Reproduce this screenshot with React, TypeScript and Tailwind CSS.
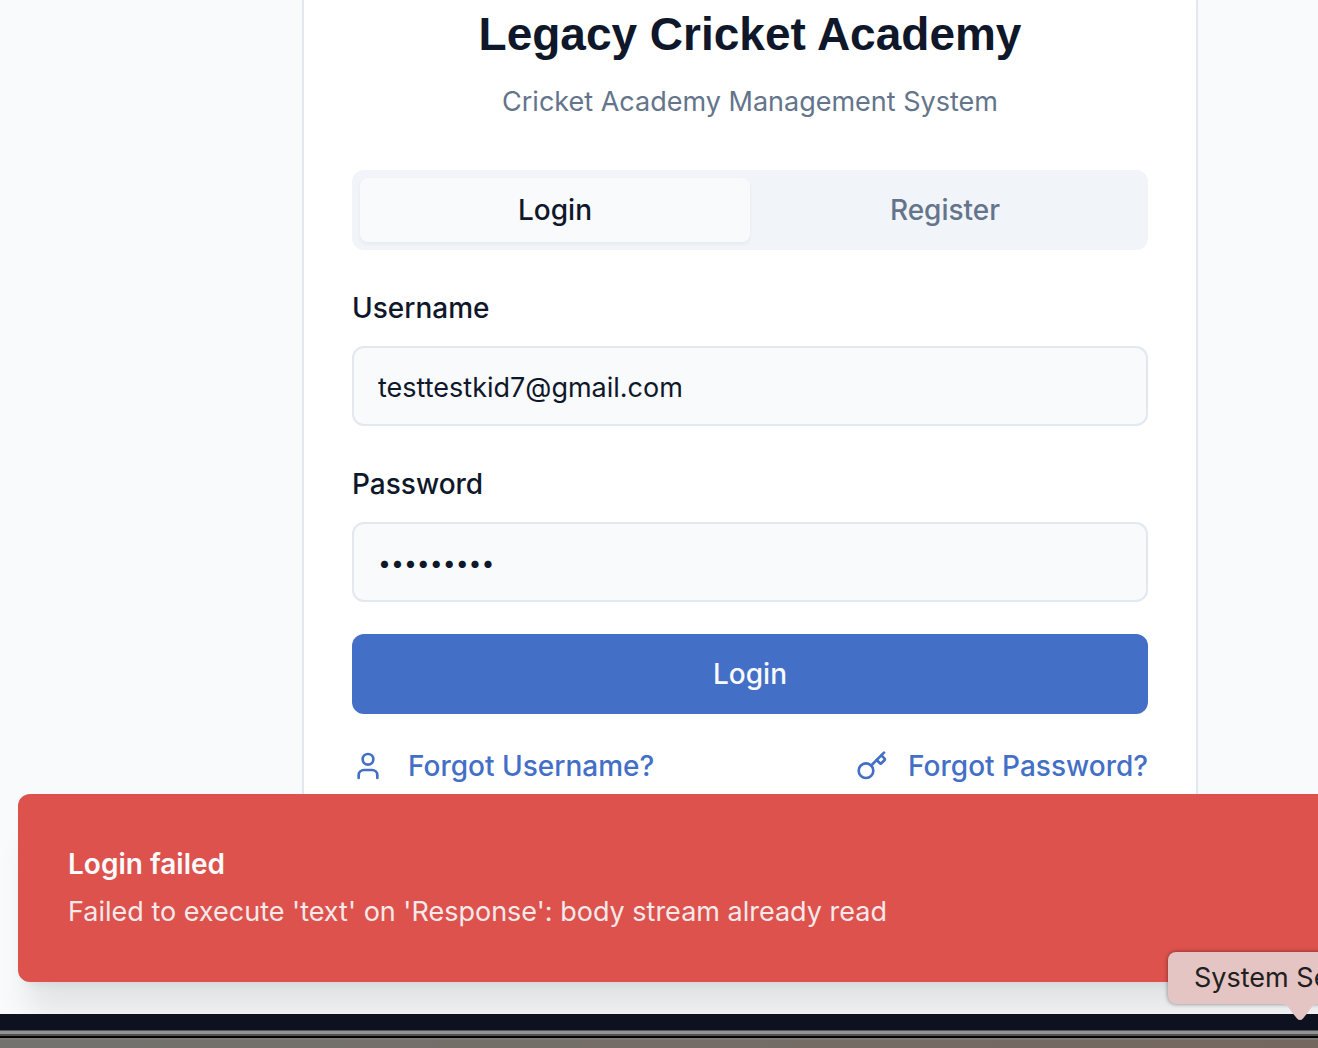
import React from "react";
import { User, Key } from "lucide-react";

const field =
  "mt-5 block h-20 w-full rounded-xl border-2 border-[#e2e8f0] bg-[#f8fafc] px-6 pt-0.5 text-[#0f172a] outline-none";

export default function App() {
  return (
    <div className="relative flex h-screen flex-col overflow-hidden bg-[#f8fafc] font-['Inter',sans-serif] text-[#0f172a]">
      <main className="flex min-h-0 flex-1 items-start justify-center pl-[182px]">
        <section className="w-full max-w-[896px] rounded-b-2xl border-x-2 border-b-2 border-[#e2e8f0] bg-white px-12 pb-12 shadow-xs">
          <h1 className="pt-1 text-center font-['Liberation_Sans',sans-serif] text-[46px] leading-[60px] font-bold">
            Legacy Cricket Academy
          </h1>
          <p className="mt-5 text-center text-[27px] leading-9 text-[#64748b]">
            Cricket Academy Management System
          </p>
          <div
            role="tablist"
            className="mt-[50px] grid h-20 grid-cols-2 rounded-xl bg-[#f1f5f9] p-2 text-[28px] font-medium"
          >
            <button
              type="button"
              role="tab"
              aria-selected="true"
              className="rounded-lg bg-[#f8fafc] shadow-[0_2px_4px_rgba(0,0,0,0.05)]"
            >
              Login
            </button>
            <button type="button" role="tab" aria-selected="false" className="rounded-lg text-[#64748b]">
              Register
            </button>
          </div>
          <form onSubmit={(e) => e.preventDefault()} className="mt-10">
            <label htmlFor="username" className="block text-[28px] leading-9 font-medium">
              Username
            </label>
            <input
              id="username"
              type="text"
              defaultValue="testtestkid7@gmail.com"
              className={`${field} text-[27px]`}
            />
            <label htmlFor="password" className="mt-10 block text-[28px] leading-9 font-medium">
              Password
            </label>
            <input
              id="password"
              type="password"
              defaultValue="cricket11"
              className={`${field} text-[23px]`}
            />
            <button
              type="submit"
              className="mt-8 h-20 w-full rounded-xl bg-[#446fc7] text-[28px] font-medium text-[#f8fafc]"
            >
              Login
            </button>
            <div className="mt-8 flex items-center justify-between text-[28px] leading-10 font-medium text-[#446fc7]">
              <a href="#forgot-username" className="flex items-center gap-6">
                <User size={32} aria-hidden="true" />
                Forgot Username?
              </a>
              <a href="#forgot-password" className="flex items-center gap-5">
                <Key size={32} aria-hidden="true" />
                Forgot Password?
              </a>
            </div>
          </form>
        </section>
      </main>

      <footer aria-hidden="true" className="relative z-10 shrink-0">
        <div className="h-4 bg-[#0e1220]" />
        <div className="h-px bg-[#55565c]" />
        <div className="h-[3px] bg-[#929292]" />
        <div className="h-0.5 bg-[#4e504f]" />
        <div className="h-0.5 bg-[#050505]" />
        <div className="h-0.5 bg-[#7d7873]" />
        <div className="h-2 bg-linear-to-r from-[#73726e] to-[#74675f]" />
      </footer>

      <div
        role="alert"
        className="absolute -right-12 bottom-[66px] left-[18px] rounded-xl border-2 border-[#dd524c] bg-[#dd524c] px-12 py-12 text-[#f8fafc] shadow-[0_40px_30px_-10px_rgba(0,0,0,0.09),0_8px_12px_-8px_rgba(0,0,0,0.1)]"
      >
        <p className="text-[28px] leading-10 font-semibold">Login failed</p>
        <p className="mt-2 text-[27px] leading-10 opacity-90">
          Failed to execute 'text' on 'Response': body stream already read
        </p>
      </div>

      <div
        role="tooltip"
        className="absolute -right-16 bottom-11 left-[1168px] z-20 h-[52px] rounded-lg bg-[#e5c4c4] pl-[26px] text-[27px] leading-[52px] whitespace-nowrap text-[#202020] shadow-[0_0_4px_rgba(0,0,0,0.45)]"
      >
        System Settings
        <svg
          aria-hidden="true"
          viewBox="0 0 36 17"
          className="absolute top-full left-[114px] h-[17px] w-9"
          fill="#e5c4c4"
        >
          <path d="M0 0C5 0 7 4 9 7L15 14.500Q18 17.500 21 14.500L27 7C29 4 31 0 36 0Z" />
        </svg>
      </div>
    </div>
  );
}
